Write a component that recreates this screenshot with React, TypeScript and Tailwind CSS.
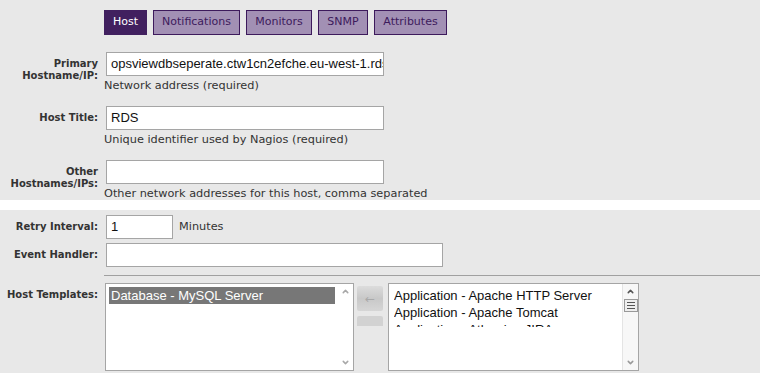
import { ChevronDown, ChevronUp } from "lucide-react";

const tabs = [
  { name: "Host", w: "w-[43px]", active: true },
  { name: "Notifications", w: "w-[87px]" },
  { name: "Monitors", w: "w-[66px]" },
  { name: "SNMP", w: "w-[50px]" },
  { name: "Attributes", w: "w-[73px]" },
];

function Label({ children }: { children: React.ReactNode }) {
  return (
    <div className="w-[98px] shrink-0 pt-[6px] text-right font-['DejaVu_Sans',Verdana,sans-serif] text-[10px] font-bold leading-[12px] text-[#333]">
      {children}
    </div>
  );
}

function TextBox({ value, w }: { value?: string; w: string }) {
  return (
    <div
      className={`${w} ml-[2px] h-[24px] overflow-hidden whitespace-nowrap border border-[#a5a5a5] bg-white px-[4px] font-['Liberation_Sans',Arial,sans-serif] text-[13px] leading-[22px] text-[#111]`}
    >
      {value}
    </div>
  );
}

function Help({ children }: { children: React.ReactNode }) {
  return (
    <div className="h-[16px] pt-[2px] font-['DejaVu_Sans',Verdana,sans-serif] text-[11.3px] leading-[16px] text-[#333]">
      {children}
    </div>
  );
}

function Field({
  label,
  value,
  help,
}: {
  label: React.ReactNode;
  value?: string;
  help: string;
}) {
  return (
    <div className="flex gap-[6px]">
      <Label>{label}</Label>
      <div className="flex flex-col">
        <TextBox value={value} w="w-[278px]" />
        <Help>{help}</Help>
      </div>
    </div>
  );
}

export default function App() {
  return (
    <div className="h-[373px] w-[760px] overflow-hidden bg-white font-['DejaVu_Sans',Verdana,sans-serif]">
      {/* host details */}
      <div className="h-[200px] bg-[#e8e8e8] pt-[10px]">
        <div className="flex gap-[6px] pl-[104px]">
          {tabs.map((t) => (
            <div
              key={t.name}
              className={`${t.w} flex h-[25px] items-center justify-center border text-[11px] ${
                t.active
                  ? "border-[#41205f] bg-[#41205f] text-white"
                  : "border-[#3d1a5c] bg-[#a290b4] text-[#3d1a5c]"
              }`}
            >
              {t.name}
            </div>
          ))}
        </div>
        <div className="mt-[17px] flex flex-col gap-[14px]">
          <Field
            label={
              <>
                Primary
                <br />
                Hostname/IP:
              </>
            }
            value="opsviewdbseperate.ctw1cn2efche.eu-west-1.rds.amazonaws.com"
            help="Network address (required)"
          />
          <Field label="Host Title:" value="RDS" help="Unique identifier used by Nagios (required)" />
          <Field
            label={
              <>
                Other
                <br />
                Hostnames/IPs:
              </>
            }
            help="Other network addresses for this host, comma separated"
          />
        </div>
      </div>

      {/* check settings */}
      <div className="mt-[10px] h-[163px] bg-[#e8e8e8] pt-[5px]">
        <div className="flex gap-[6px]">
          <Label>Retry Interval:</Label>
          <TextBox value="1" w="w-[67px]" />
          <span className="pt-[6px] text-[11.3px] leading-[12px] text-[#333]">Minutes</span>
        </div>
        <div className="mt-[4px] flex gap-[6px]">
          <Label>Event Handler:</Label>
          <TextBox w="w-[337px]" />
        </div>
        <div className="ml-[104px] mt-[8px] h-px bg-[#a0a0a0]" />
        <div className="mt-[7px] flex gap-[6px]">
          <Label>Host Templates:</Label>
          <div className="flex items-start">
            <div className="relative ml-px h-[88px] w-[249px] border border-[#a5a5a5] bg-white p-[3px] font-['Liberation_Sans',Arial,sans-serif] text-[13px] leading-[17px]">
              <div className="w-[226px] bg-[#777] pl-[2px] text-white">Database - MySQL Server</div>
              <div className="absolute right-0 top-0 flex h-full w-[16px] flex-col items-center justify-between py-[3px] text-[#a8a8a8]">
                <ChevronUp size={9} strokeWidth={4} />
                <ChevronDown size={9} strokeWidth={4} />
              </div>
            </div>
            <div className="ml-[3px] mt-[3px] flex w-[26px] flex-col gap-[5px]">
              <div className="flex h-[25px] items-center justify-center rounded-[2px] bg-gradient-to-b from-[#dcdcdc] via-[#c8c8c8] to-[#d6d6d6] text-[12px] leading-none text-[#a9a9a9]">
                ←
              </div>
              <div className="h-[10px] rounded-t-[2px] bg-[#d2d2d2]" />
            </div>
            <div className="relative ml-[5px] h-[88px] w-[251px] border border-[#a5a5a5] bg-white pl-[5px] pt-[3px] font-['Liberation_Sans',Arial,sans-serif] text-[13px] leading-[17px] text-[#111]">
              <div className="h-[40px] overflow-hidden">
                <div>Application - Apache HTTP Server</div>
                <div>Application - Apache Tomcat</div>
                <div>Application - Atlassian JIRA</div>
              </div>
              <div className="absolute right-0 top-0 flex h-full w-[16px] flex-col items-center border-l border-[#e4e4e4] bg-[#f7f7f7] py-[3px] text-[#555]">
                <ChevronUp size={9} strokeWidth={4} />
                <div className="mt-[3px] flex h-[13px] w-[14px] flex-col items-center justify-center gap-[2px] border border-[#999] bg-[#eee]">
                  <div className="h-px w-[8px] bg-[#555]" />
                  <div className="h-px w-[8px] bg-[#555]" />
                  <div className="h-px w-[8px] bg-[#555]" />
                </div>
                <div className="flex-1" />
                <ChevronDown size={9} strokeWidth={4} className="text-[#999]" />
              </div>
            </div>
          </div>
        </div>
      </div>
    </div>
  );
}
